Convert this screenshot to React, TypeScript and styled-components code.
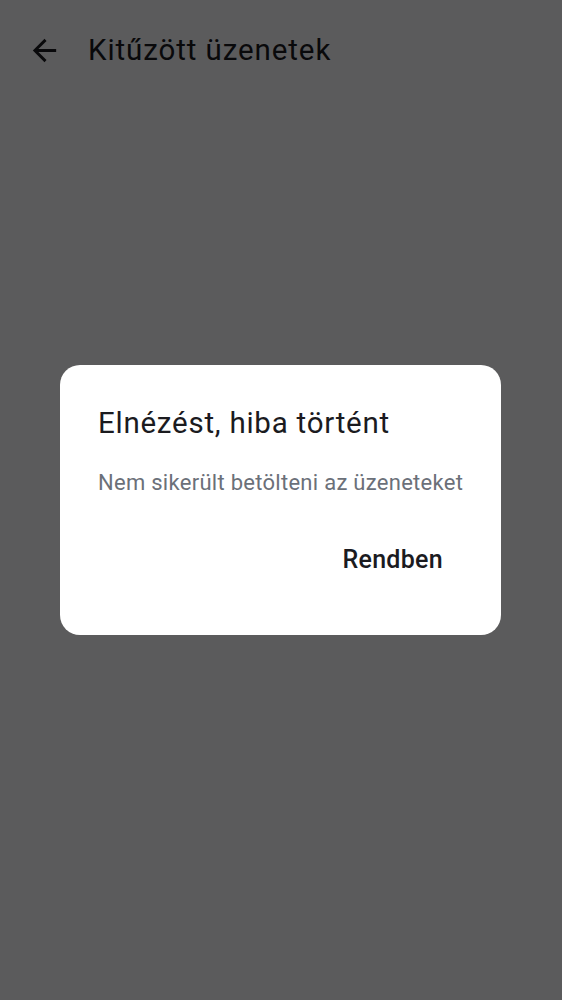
import React from "react";
import styled, { createGlobalStyle } from "styled-components";

const GlobalStyle = createGlobalStyle`
  html, body {
    margin: 0;
    padding: 0;
    background: #ffffff;
    font-family: Roboto, "Noto Sans", "Liberation Sans", sans-serif;
  }
`;

const Page = styled.div`
  width: 562px;
  height: 1000px;
  background: #fdfcff;
`;

const TopBar = styled.header`
  display: flex;
  align-items: center;
  height: 100px;
  padding: 0 0 0 27px;
  gap: 26px;
  box-sizing: border-box;
`;

const BackButton = styled.button`
  display: flex;
  align-items: center;
  justify-content: center;
  width: 35px;
  height: 35px;
  padding: 0;
  border: none;
  background: transparent;
  color: #1b1b1f;
`;

const PageTitle = styled.h1`
  margin: 0;
  font-size: 29.5px;
  font-weight: 400;
  color: #1b1b1f;
  letter-spacing: 0.9px;
`;

const Scrim = styled.div`
  position: fixed;
  inset: 0;
  background: rgba(0, 0, 0, 0.64);
  display: flex;
  align-items: center;
  justify-content: center;
`;

const Dialog = styled.div`
  width: 441px;
  height: 270px;
  box-sizing: border-box;
  margin-right: 1px;
  background: #ffffff;
  border-radius: 20px;
  padding: 40px 38px 0 38px;
  display: flex;
  flex-direction: column;
`;

const DialogTitle = styled.h2`
  margin: 0;
  font-size: 29.5px;
  font-weight: 400;
  line-height: 36px;
  color: #1b1b1f;
  letter-spacing: 0.75px;
  white-space: nowrap;
`;

const DialogText = styled.p`
  margin: 28px 0 0 0;
  font-size: 22px;
  line-height: 28px;
  color: #6b7079;
  letter-spacing: 0.28px;
  white-space: nowrap;
`;

const Actions = styled.div`
  display: flex;
  justify-content: flex-end;
  margin-top: 48px;
  margin-right: 20px;
`;

const TextButton = styled.button`
  border: none;
  background: transparent;
  padding: 0;
  font-family: inherit;
  font-size: 25px;
  font-weight: 500;
  color: #1b1b1f;
  letter-spacing: 0.3px;
`;

const ArrowBack = () => (
  <svg width="35" height="35" viewBox="0 0 24 24" fill="currentColor">
    <path d="M20 11H7.83l5.59-5.59L12 4l-8 8 8 8 1.41-1.41L7.83 13H20v-2z" />
  </svg>
);

const App: React.FC = () => {
  return (
    <>
      <GlobalStyle />
      <Page>
        <TopBar>
          <BackButton aria-label="Vissza">
            <ArrowBack />
          </BackButton>
          <PageTitle>Kitűzött üzenetek</PageTitle>
        </TopBar>
      </Page>
      <Scrim>
        <Dialog role="alertdialog">
          <DialogTitle>Elnézést, hiba történt</DialogTitle>
          <DialogText>Nem sikerült betölteni az üzeneteket</DialogText>
          <Actions>
            <TextButton>Rendben</TextButton>
          </Actions>
        </Dialog>
      </Scrim>
    </>
  );
};

export default App;
